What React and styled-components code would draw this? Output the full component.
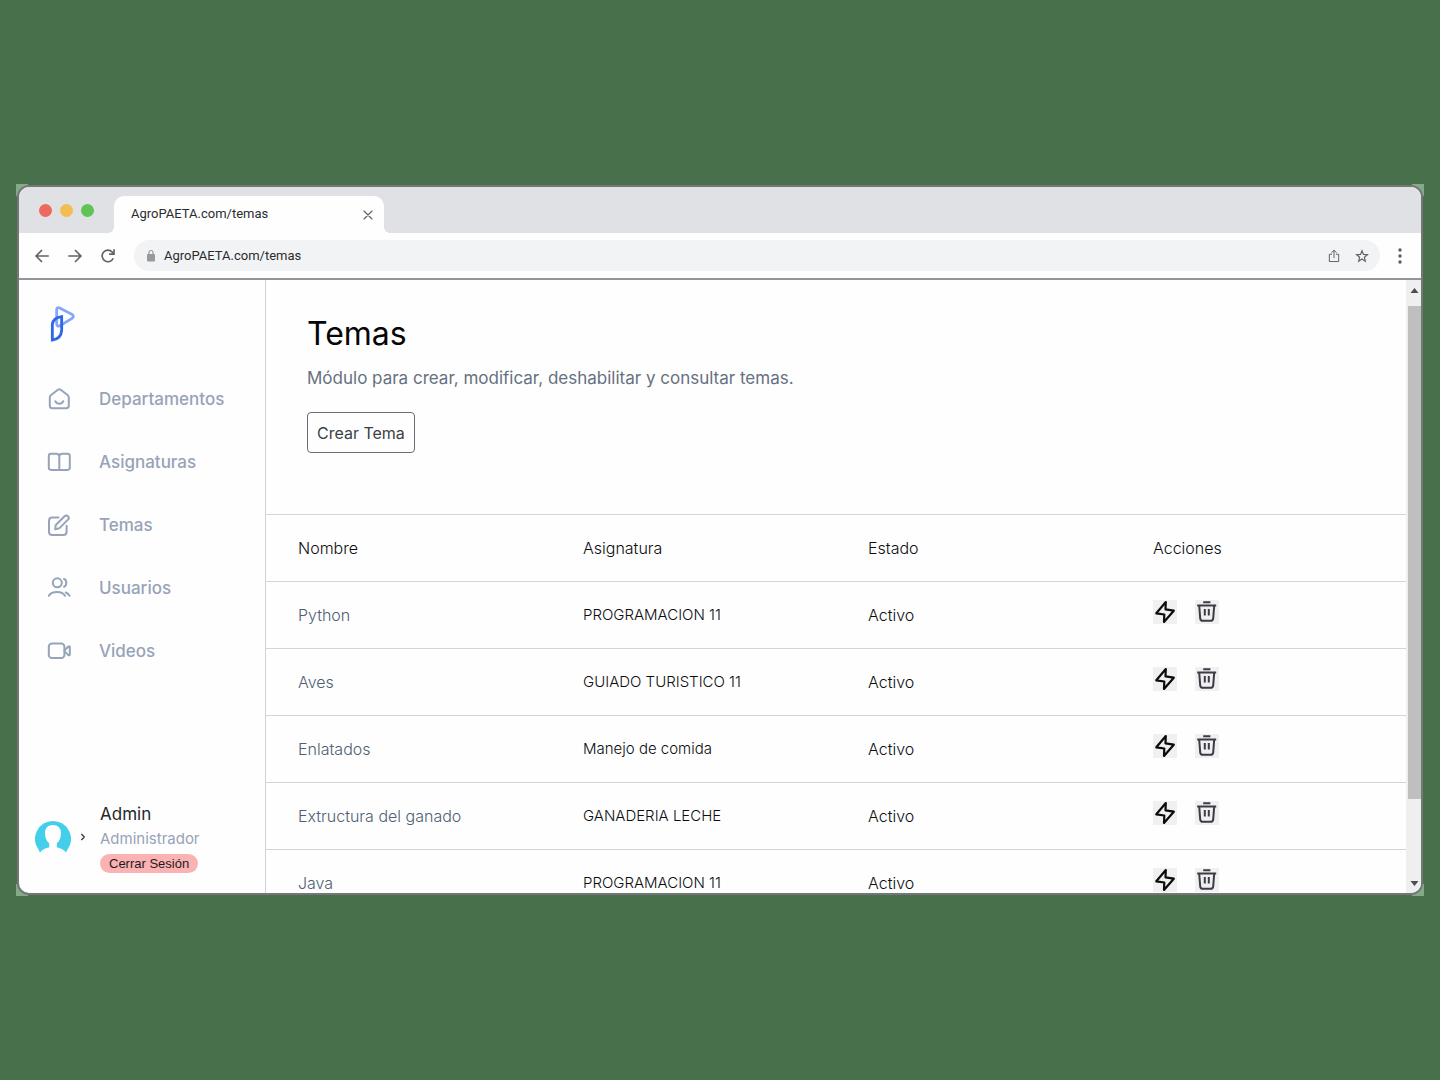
import React from "react";
import styled, { createGlobalStyle } from "styled-components";

const Global = createGlobalStyle`
  *, *::before, *::after { box-sizing: border-box; }
  body {
    margin: 0;
    background: #48704b;
    font-family: Inter, "Noto Sans", sans-serif;
    color: #1b1c1e;
  }
  button, input { font: inherit; color: inherit; margin: 0; padding: 0; border: 0; background: none; }
  svg { display: block; flex: none; }
`;

const Backdrop = styled.div`
  display: flex;
  height: 100vh;
  min-height: 720px;
  padding: 184px 16px;
  background: #48704b;
`;
const Frame = styled.div`
  --corner: linear-gradient(#84ab89, #84ab89);
  flex: 1;
  min-width: 0;
  display: flex;
  padding: 1px;
  background:
    var(--corner) 0 0 / 12px 12px no-repeat,
    var(--corner) 100% 0 / 12px 12px no-repeat,
    var(--corner) 0 100% / 12px 12px no-repeat,
    var(--corner) 100% 100% / 12px 12px no-repeat;
`;
const Browser = styled.div`
  flex: 1;
  min-width: 0;
  display: flex;
  flex-direction: column;
  overflow: hidden;
  border: 2px solid #757678;
  border-radius: 12px;
  background: #fefefe;
`;

const TabStrip = styled.div`
  flex: none;
  display: flex;
  align-items: flex-end;
  height: 46px;
  padding-left: 20px;
  background: #dfe1e5;
`;
const Lights = styled.div`
  display: flex;
  align-self: center;
  gap: 8px;
  width: 75px;
`;
const Light = styled.span`
  width: 13px;
  height: 13px;
  border-radius: 50%;
  background: ${(p) => p.$color};
`;
const Tab = styled.div`
  position: relative;
  display: flex;
  align-items: center;
  justify-content: space-between;
  width: 270px;
  height: 37px;
  padding: 0 10px 2px 17px;
  border-radius: 10px 10px 0 0;
  background: #fefefe;
  font: 13px/18px Roboto, sans-serif;
  color: #2b2c2f;

  &::before, &::after {
    content: "";
    position: absolute;
    bottom: 0;
    width: 6px;
    height: 6px;
  }
  &::before { left: -6px; background: radial-gradient(circle at 0 0, transparent 6px, #fefefe 6px); }
  &::after { right: -6px; background: radial-gradient(circle at 100% 0, transparent 6px, #fefefe 6px); }
`;
const IconButton = styled.button`
  display: grid;
  place-items: center;
  width: ${(p) => p.$size || 20}px;
  height: ${(p) => p.$size || 20}px;
  color: #5f6164;
  cursor: pointer;
`;
const CloseTab = styled(IconButton)`
  align-self: flex-end;
  height: 32px;
  width: 12px;
`;

const Toolbar = styled.div`
  flex: none;
  display: flex;
  align-items: center;
  height: 47px;
  padding: 0 11px 0 13px;
  border-bottom: 2px solid #939495;
`;
const NavButtons = styled.div`
  display: flex;
  gap: 13px;
  width: 102px;
`;
const Address = styled.label`
  flex: 1;
  min-width: 0;
  display: flex;
  align-items: center;
  gap: 8px;
  height: 31px;
  padding: 0 8px 0 12px;
  margin-right: 10px;
  border-radius: 16px;
  background: #f1f3f4;
`;
const AddressInput = styled.input`
  flex: 1;
  min-width: 0;
  font: 13px/18px Roboto, sans-serif;
  color: #2b2c2f;
  outline: 0;
`;
const AddressActions = styled.div`
  display: flex;
  gap: 8px;
`;

const Viewport = styled.div`
  flex: 1;
  min-height: 0;
  display: flex;
`;
const Sidebar = styled.aside`
  flex: none;
  display: flex;
  flex-direction: column;
  justify-content: space-between;
  width: 247px;
  border-right: 1px solid #d0d2d7;
`;
const LogoLink = styled.a`
  display: block;
  width: 27px;
  margin: 25px 0 0 30px;
`;
const Menu = styled.nav`
  display: flex;
  flex-direction: column;
  gap: 39px;
  margin-top: 44px;
  padding-left: 28px;
`;
const MenuLink = styled.a`
  display: flex;
  align-items: center;
  gap: 28px;
  height: 24px;
  font-size: 17px;
  line-height: 24px;
  font-weight: 500;
  color: #97a3b8;
  text-decoration: none;
`;
const User = styled.div`
  display: flex;
  align-items: center;
  padding: 0 16px 20px;
`;
const UserMenu = styled.button`
  display: flex;
  align-items: center;
  gap: 8px;
  width: 65px;
  color: #3c3d40;
  cursor: pointer;
`;
const UserInfo = styled.div`
  display: flex;
  flex-direction: column;
  align-items: flex-start;
`;
const UserName = styled.span`
  font-size: 17px;
  line-height: 26px;
  color: #25262b;
`;
const UserRole = styled.span`
  margin-bottom: 3px;
  font-size: 15px;
  line-height: 24px;
  color: #97a3b8;
`;
const Logout = styled.button`
  height: 19px;
  padding: 0 9px;
  border-radius: 10px;
  background: #fab2b3;
  font: 13px/19px "Liberation Sans", sans-serif;
  color: #1f1a1b;
  cursor: pointer;
`;

const Main = styled.main`
  flex: 1;
  min-width: 0;
  overflow: hidden;
`;
const PageHeader = styled.header`
  height: 234px;
  padding: 34px 41px 0;
`;
const Title = styled.h1`
  margin: 0;
  font-size: 32px;
  line-height: 40px;
  font-weight: 400;
  color: #060607;
`;
const Lead = styled.p`
  margin: 12px 0 22px;
  font-size: 17px;
  line-height: 24px;
  font-weight: 400;
  color: #66717f;
`;
const CreateButton = styled.button`
  height: 41px;
  padding: 0 9px;
  border: 1px solid #6b6c70;
  border-radius: 4px;
  font-size: 16px;
  line-height: 24px;
  color: #3c3f46;
  cursor: pointer;
`;

const Table = styled.table`
  width: 100%;
  table-layout: fixed;
  border-collapse: collapse;
  font-size: 16px;
  line-height: 24px;
`;
const Row = styled.tr`
  height: 67px;
  border-top: 1px solid #d3d5d9;
`;
const HeadCell = styled.th`
  padding: 0 0 0 32px;
  text-align: left;
  font-weight: 300;
  color: #0c0d0f;
`;
const Cell = styled.td`
  padding: 0 0 0 32px;
  font-size: ${(p) => (p.$compact ? 15 : 16)}px;
  font-weight: 300;
  color: ${(p) => (p.$muted ? "#4f5f73" : "#0c0d0f")};
`;
const RowActions = styled.div`
  display: flex;
  gap: 18px;
  padding-bottom: 6px;
`;
const RowButton = styled(IconButton)`
  background: #f0f0f0;
  color: ${(p) => p.$color};
`;

const Scrollbar = styled.div`
  flex: none;
  display: flex;
  flex-direction: column;
  width: 15px;
  padding-left: 2px;
  background: #efefef;
`;
const ScrollArrow = styled.span`
  flex: none;
  display: grid;
  place-items: center;
  height: 20px;
  color: #4d4d4d;
`;
const Track = styled.div`
  flex: 1;
  padding-top: 6px;
`;
const Thumb = styled.div`
  height: 87%;
  background: #bfbfbf;
`;

const Stroke = ({ children, size = 24, width = 2, ...rest }) => (
  <svg width={size} height={size} viewBox="0 0 24 24" fill="none" stroke="currentColor"
    strokeWidth={width} strokeLinecap="round" strokeLinejoin="round" aria-hidden="true" {...rest}>
    {children}
  </svg>
);

const Logo = () => (
  <svg width="27" height="38" viewBox="0 0 81 114" fill="none" aria-hidden="true">
    <path d="M23 15 Q23 5 32 9 L69 28 Q77 34 69 40 L35 61 Q23 68 23 55 Z" stroke="#86a6fa" strokeWidth="8.5" />
    <path d="M10 105 V58 Q13 38 38 35 V76 Q36 102 10 105 Z" stroke="#2f66ea" strokeWidth="8.5" strokeLinejoin="miter" />
  </svg>
);
const HomeIcon = () => (
  <Stroke width={2}>
    <path d="M2.8 10.4c0-1.1.4-1.7 1.3-2.4l6.8-5.3c.9-.7 1.9-.7 2.8 0L20.5 8c.9.7 1.3 1.3 1.3 2.4v8.4c0 1.7-.7 2.4-2.4 2.4H5.2c-1.7 0-2.4-.7-2.4-2.4z" />
    <path d="M8.3 14.2c1.8 3.3 6.2 3.3 8 0" />
  </Stroke>
);
const BookIcon = () => (
  <Stroke width={2}>
    <path d="M12.3 6.5C12.3 4.5 11.3 3.7 9.3 3.7H4.1C2.5 3.7 1.8 4.4 1.8 6v11.6c0 1.6.7 2.3 2.3 2.3h16.4c1.6 0 2.3-.7 2.3-2.3V6c0-1.6-.7-2.3-2.3-2.3h-5.2c-2 0-3 .8-3 2.8v13" />
  </Stroke>
);
const EditIcon = () => (
  <Stroke width={2}>
    <path d="M11.5 4.5H5.2c-2.3 0-3.2.9-3.2 3.2V18.8C2 21.1 2.900 22 5.200 22h11.200c2.300 0 3.200-.9 3.200-3.200v-6" />
    <path d="M8.200 16.300l.4-3.400c.1-.6.3-1 .7-1.400l8.300-8.300c1-1 2.400-1 3.400 0s1 2.400 0 3.400l-8.300 8.300c-.4.4-.8.6-1.400.7z" />
  </Stroke>
);
const UsersIcon = () => (
  <Stroke width={2}>
    <circle cx="10.3" cy="6.8" r="4.5" />
    <path d="M1.8 19.8C5 14.8 15.1 14.8 18 19.8" />
    <path d="M17 2.8c3.1 1.3 3.1 6.7 0 8" />
    <path d="M18.8 16.5c1.6.7 2.8 1.7 3.8 3.2" />
  </Stroke>
);
const VideoIcon = () => (
  <Stroke width={2}>
    <rect x="1.8" y="4.5" width="15.6" height="14.6" rx="3.2" />
    <path d="M17.8 11l3.4-3.3c.9-.8 1.600-.5 1.600.5v7.200c0 1-.7 1.300-1.600.5l-3.400-3.300z" />
  </Stroke>
);
const BoltIcon = () => (
  <Stroke width={2.2}>
    <path d="M12.800 2L3.300 13.300l8 1.200L11 22 20.800 10.700l-8.300-1.300z" />
  </Stroke>
);
const TrashIcon = () => (
  <Stroke width={2} strokeLinecap="butt">
    <path d="M8.2 2.3h7.2M2.2 5.5h19" />
    <path d="M4.2 5.5l1 12.8c.2 1.7 1 2.5 2.7 2.5h7.6c1.7 0 2.5-.8 2.7-2.5l1-12.8" />
    <path d="M9.8 9v6.5M13.8 9v6.5" />
  </Stroke>
);
const Avatar = () => (
  <svg width="36" height="32" viewBox="0 0 36 32" aria-hidden="true">
    <path d="M18 0a18 18 0 0 1 14.5 28.5L31 31.5c-2-3.2-6-4.5-9.2-5.2v-4c2.6-2 4.2-5.5 4.2-10.3 0-5-3-8-8-8s-8 3-8 8c0 4.8 1.6 8.3 4.2 10.3v4c-3.2.7-7.2 2-9.2 5.2l-1.5-3A18 18 0 0 1 18 0z" fill="#43cfe9" />
  </svg>
);

const menu = [
  ["Departamentos", HomeIcon],
  ["Asignaturas", BookIcon],
  ["Temas", EditIcon],
  ["Usuarios", UsersIcon],
  ["Videos", VideoIcon],
];
const topics = [
  ["Python", "PROGRAMACION 11", "Activo"],
  ["Aves", "GUIADO TURISTICO 11", "Activo"],
  ["Enlatados", "Manejo de comida", "Activo"],
  ["Extructura del ganado", "GANADERIA LECHE", "Activo"],
  ["Java", "PROGRAMACION 11", "Activo"],
];

export default function App() {
  return (
    <Backdrop>
      <Global />
      <Frame>
        <Browser>
          <TabStrip>
            <Lights>
              <Light $color="#ed685d" />
              <Light $color="#f4bd4f" />
              <Light $color="#5fc454" />
            </Lights>
            <Tab>
              <span>AgroPAETA.com/temas</span>
              <CloseTab aria-label="Cerrar pestaña">
                <Stroke size={12} width={2.2}><path d="M4 4l16 16M20 4L4 20" /></Stroke>
              </CloseTab>
            </Tab>
          </TabStrip>
          <Toolbar>
            <NavButtons>
              <IconButton aria-label="Atrás">
                <Stroke size={18} width={2.2} strokeLinecap="butt"><path d="M21 12H4M12 4l-8 8 8 8" /></Stroke>
              </IconButton>
              <IconButton aria-label="Adelante">
                <Stroke size={18} width={2.2} strokeLinecap="butt"><path d="M3 12h17M12 4l8 8-8 8" /></Stroke>
              </IconButton>
              <IconButton aria-label="Recargar">
                <Stroke size={18} width={2.2} strokeLinecap="butt" strokeLinejoin="miter">
                  <path d="M19 15A7.7 7.7 0 1 1 17.5 6.6L19.5 9" />
                  <path d="M20 3v6.5h-6.5" />
                </Stroke>
              </IconButton>
            </NavButtons>
            <Address>
              <svg width="10" height="14" viewBox="0 0 10 14" aria-hidden="true">
                <rect x="1" y="5" width="8" height="7.5" rx="1" fill="#97999c" />
                <path d="M3 5V3.5a2 2 0 0 1 4 0V5" fill="none" stroke="#97999c" strokeWidth="1.2" />
              </svg>
              <AddressInput aria-label="Dirección" defaultValue="AgroPAETA.com/temas" />
              <AddressActions>
                <IconButton aria-label="Compartir">
                  <Stroke size={14} width={1.7}>
                    <path d="M8 9H4v12.5h16V9h-4M12 15V2.5M8 6l4-3.7L16 6" />
                  </Stroke>
                </IconButton>
                <IconButton aria-label="Marcador">
                  <Stroke size={14} width={2} strokeLinejoin="miter">
                    <path d="M12 3l2.5 6.3 6.8.5-5.2 4.4 1.6 6.6-5.7-3.6-5.7 3.6 1.6-6.6-5.2-4.4 6.8-.5z" />
                  </Stroke>
                </IconButton>
              </AddressActions>
            </Address>
            <IconButton aria-label="Menú">
              <svg width="4" height="16" viewBox="0 0 4 16" fill="#5a5c5f" aria-hidden="true">
                <circle cx="2" cy="2" r="1.7" /><circle cx="2" cy="8" r="1.7" /><circle cx="2" cy="14" r="1.7" />
              </svg>
            </IconButton>
          </Toolbar>
          <Viewport>
            <Sidebar>
              <div>
                <LogoLink href="#inicio" aria-label="Inicio"><Logo /></LogoLink>
                <Menu>
                  {menu.map(([label, Icon]) => (
                    <MenuLink key={label} href={`#${label.toLowerCase()}`}><Icon />{label}</MenuLink>
                  ))}
                </Menu>
              </div>
              <User>
                <UserMenu aria-label="Cuenta">
                  <Avatar />
                  <Stroke size={8} width={4}><path d="M8 4l8 8-8 8" /></Stroke>
                </UserMenu>
                <UserInfo>
                  <UserName>Admin</UserName>
                  <UserRole>Administrador</UserRole>
                  <Logout>Cerrar Sesión</Logout>
                </UserInfo>
              </User>
            </Sidebar>
            <Main>
              <PageHeader>
                <Title>Temas</Title>
                <Lead>Módulo para crear, modificar, deshabilitar y consultar temas.</Lead>
                <CreateButton>Crear Tema</CreateButton>
              </PageHeader>
              <Table>
                <thead>
                  <Row>
                    {["Nombre", "Asignatura", "Estado", "Acciones"].map((h) => (
                      <HeadCell key={h} scope="col">{h}</HeadCell>
                    ))}
                  </Row>
                </thead>
                <tbody>
                  {topics.map(([name, subject, state]) => (
                    <Row key={name}>
                      <Cell $muted>{name}</Cell>
                      <Cell $compact>{subject}</Cell>
                      <Cell>{state}</Cell>
                      <Cell>
                        <RowActions>
                          <RowButton $size={24} $color="#0b0b0c" aria-label={`Activar ${name}`}><BoltIcon /></RowButton>
                          <RowButton $size={24} $color="#3b3c46" aria-label={`Eliminar ${name}`}><TrashIcon /></RowButton>
                        </RowActions>
                      </Cell>
                    </Row>
                  ))}
                </tbody>
              </Table>
            </Main>
            <Scrollbar aria-hidden="true">
              <ScrollArrow>
                <svg width="9" height="5" viewBox="0 0 8 5" fill="currentColor"><path d="M0 5l4-5 4 5z" /></svg>
              </ScrollArrow>
              <Track><Thumb /></Track>
              <ScrollArrow>
                <svg width="9" height="5" viewBox="0 0 8 5" fill="currentColor"><path d="M0 0l4 5 4-5z" /></svg>
              </ScrollArrow>
            </Scrollbar>
          </Viewport>
        </Browser>
      </Frame>
    </Backdrop>
  );
}
